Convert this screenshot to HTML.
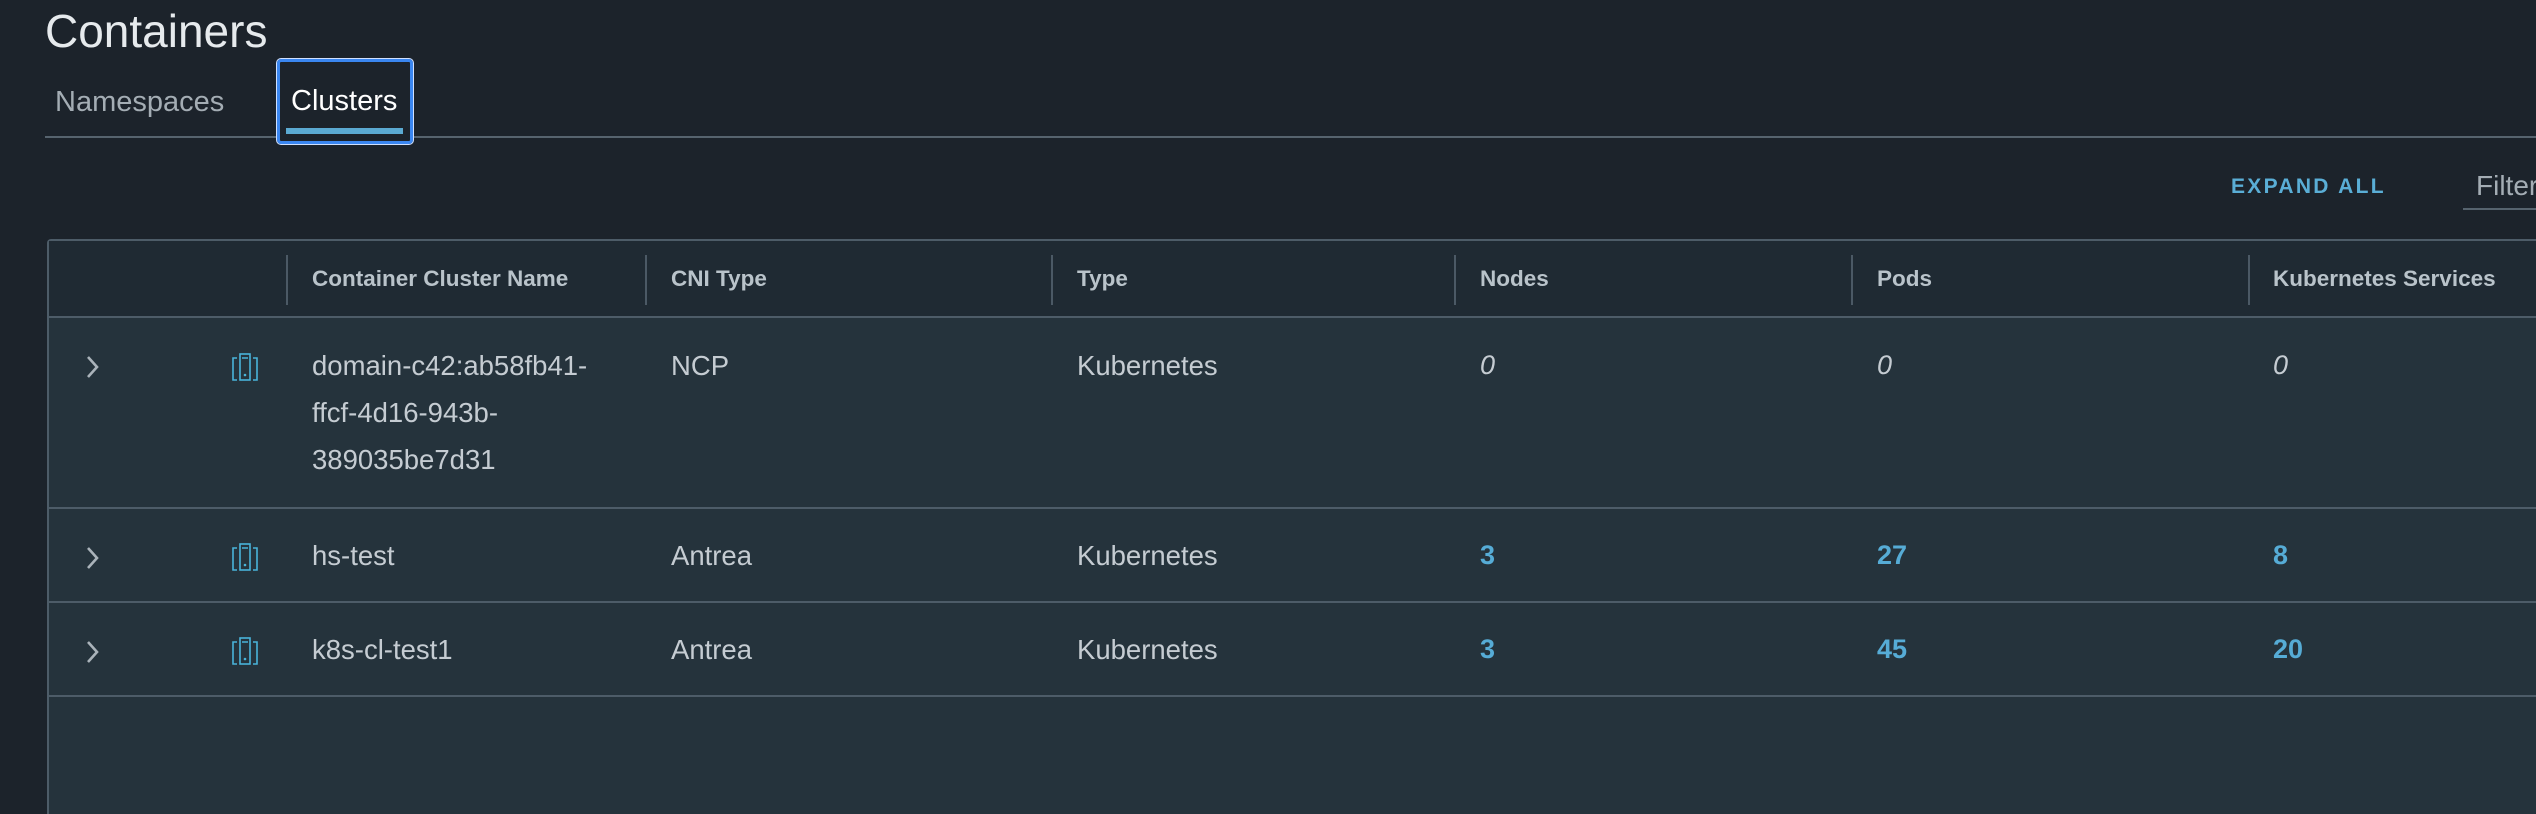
<!DOCTYPE html>
<html><head><meta charset="utf-8"><style>
body{margin:0;width:2536px;height:814px;background:#1c232b;overflow:hidden;font-family:"Liberation Sans",sans-serif;position:relative;color:#c5ccd2}
.a{position:absolute;white-space:nowrap}
.h{font-size:22.5px;font-weight:bold;color:#b9c3ca;top:266px}
.c{font-size:27.5px;color:#c5ccd2}
.n{font-size:27px;font-weight:bold;color:#56acd6}
.z{font-size:27px;font-style:italic;color:#c5ccd2}
.vl{position:absolute;top:255px;width:2px;height:50px;background:#4b5965}
.hl{position:absolute;left:47px;right:0;height:2px;background:#4d5c68}
.chev{position:absolute;left:83px;width:18px;height:28px}
.ico{position:absolute;left:232px;width:26px;height:28px}
</style></head><body>
<div class="a" style="left:45px;top:4px;font-size:46px;color:#e6eaed">Containers</div>
<div class="a" style="left:55px;top:86px;font-size:29px;color:#a4adb4">Namespaces</div>
<div style="position:absolute;left:45px;right:0;top:136px;height:2px;background:#56636e"></div>
<div style="position:absolute;left:277px;top:59px;width:130px;height:79px;border:3px solid #3a86f0;border-radius:4px;outline:1px solid #cfe0ff;background:#1c232b"></div>
<div class="a" style="left:291px;top:85px;font-size:29px;color:#fff">Clusters</div>
<div style="position:absolute;left:286px;top:128px;width:117px;height:6px;background:#5baad2"></div>
<div class="a" style="left:2231px;top:175px;font-size:21px;font-weight:bold;letter-spacing:2.3px;color:#5aaed6">EXPAND ALL</div>
<div class="a" style="left:2476px;top:170px;font-size:28px;color:#a4adb4">Filter</div>
<div style="position:absolute;left:2463px;right:0;top:208px;height:2px;background:#56636e"></div>
<div style="position:absolute;left:47px;right:0;top:239px;bottom:0;background:#25333c;border-left:2px solid #4d5c68;border-top:2px solid #4d5c68;border-top-left-radius:4px"></div>
<div style="position:absolute;left:49px;right:0;top:241px;height:76px;background:#1f2a33"></div>
<div class="hl" style="top:316px"></div>
<div class="vl" style="left:286px"></div><div class="vl" style="left:645px"></div><div class="vl" style="left:1051px"></div><div class="vl" style="left:1454px"></div><div class="vl" style="left:1851px"></div><div class="vl" style="left:2248px"></div>
<div class="a h" style="left:312px">Container Cluster Name</div>
<div class="a h" style="left:671px">CNI Type</div>
<div class="a h" style="left:1077px">Type</div>
<div class="a h" style="left:1480px">Nodes</div>
<div class="a h" style="left:1877px">Pods</div>
<div class="a h" style="left:2273px">Kubernetes Services</div>
<div class="hl" style="top:507px"></div>
<div class="hl" style="top:601px"></div>
<div class="hl" style="top:695px"></div>
<svg class="chev" style="top:353px" viewBox="0 0 18 28"><path d="M5 4l9 10-9 10" fill="none" stroke="#aab3ba" stroke-width="2.6"/></svg>
<svg class="chev" style="top:544px" viewBox="0 0 18 28"><path d="M5 4l9 10-9 10" fill="none" stroke="#aab3ba" stroke-width="2.6"/></svg>
<svg class="chev" style="top:638px" viewBox="0 0 18 28"><path d="M5 4l9 10-9 10" fill="none" stroke="#aab3ba" stroke-width="2.6"/></svg>
<svg class="ico" style="top:353px" viewBox="0 0 26 28"><g fill="none" stroke="#49b3d9" stroke-width="1.6"><rect x="8" y="1" width="10" height="26"/><path d="M10 5h6M5 5H1v22h4M21 5h4v22h-4"/></g><circle cx="13" cy="22" r="1.3" fill="#49b3d9"/></svg>
<svg class="ico" style="top:543px" viewBox="0 0 26 28"><g fill="none" stroke="#49b3d9" stroke-width="1.6"><rect x="8" y="1" width="10" height="26"/><path d="M10 5h6M5 5H1v22h4M21 5h4v22h-4"/></g><circle cx="13" cy="22" r="1.3" fill="#49b3d9"/></svg>
<svg class="ico" style="top:637px" viewBox="0 0 26 28"><g fill="none" stroke="#49b3d9" stroke-width="1.6"><rect x="8" y="1" width="10" height="26"/><path d="M10 5h6M5 5H1v22h4M21 5h4v22h-4"/></g><circle cx="13" cy="22" r="1.3" fill="#49b3d9"/></svg>
<div class="a c" style="left:312px;top:342px;line-height:47px">domain-c42:ab58fb41-<br>ffcf-4d16-943b-<br>389035be7d31</div>
<div class="a c" style="left:671px;top:342px;line-height:47px">NCP</div>
<div class="a c" style="left:1077px;top:342px;line-height:47px">Kubernetes</div>
<div class="a z" style="left:1480px;top:342px;line-height:47px">0</div>
<div class="a z" style="left:1877px;top:342px;line-height:47px">0</div>
<div class="a z" style="left:2273px;top:342px;line-height:47px">0</div>
<div class="a c" style="left:312px;top:532px;line-height:47px">hs-test</div>
<div class="a c" style="left:671px;top:532px;line-height:47px">Antrea</div>
<div class="a c" style="left:1077px;top:532px;line-height:47px">Kubernetes</div>
<div class="a n" style="left:1480px;top:532px;line-height:47px">3</div>
<div class="a n" style="left:1877px;top:532px;line-height:47px">27</div>
<div class="a n" style="left:2273px;top:532px;line-height:47px">8</div>
<div class="a c" style="left:312px;top:626px;line-height:47px">k8s-cl-test1</div>
<div class="a c" style="left:671px;top:626px;line-height:47px">Antrea</div>
<div class="a c" style="left:1077px;top:626px;line-height:47px">Kubernetes</div>
<div class="a n" style="left:1480px;top:626px;line-height:47px">3</div>
<div class="a n" style="left:1877px;top:626px;line-height:47px">45</div>
<div class="a n" style="left:2273px;top:626px;line-height:47px">20</div>
</body></html>
